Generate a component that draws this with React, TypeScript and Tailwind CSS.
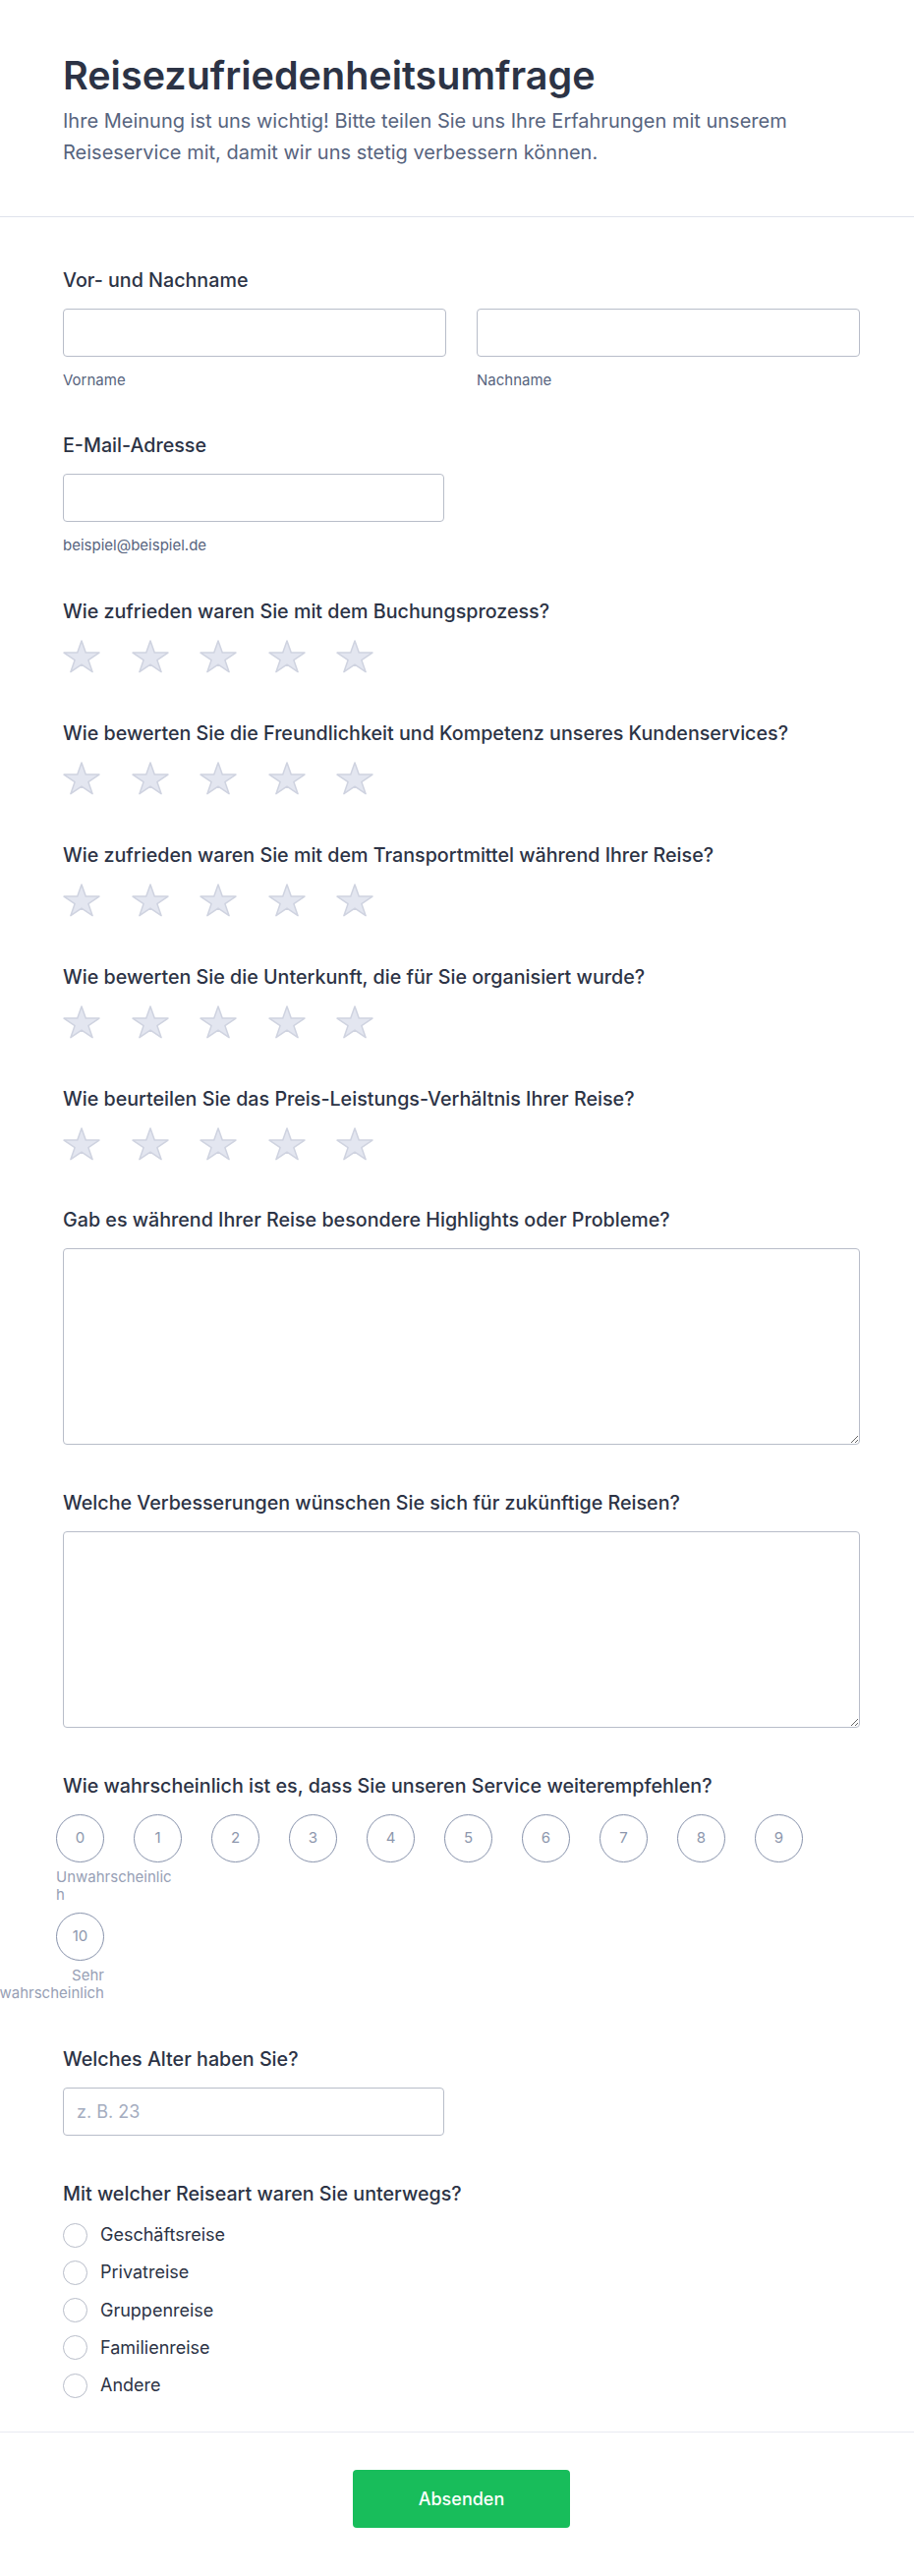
import React from 'react'

const ratingQuestions = [
  'Wie zufrieden waren Sie mit dem Buchungsprozess?',
  'Wie bewerten Sie die Freundlichkeit und Kompetenz unseres Kundenservices?',
  'Wie zufrieden waren Sie mit dem Transportmittel während Ihrer Reise?',
  'Wie bewerten Sie die Unterkunft, die für Sie organisiert wurde?',
  'Wie beurteilen Sie das Preis-Leistungs-Verhältnis Ihrer Reise?',
]

const travelTypes = ['Geschäftsreise', 'Privatreise', 'Gruppenreise', 'Familienreise', 'Andere']

function Label({ children }: { children: React.ReactNode }) {
  return <div className="text-[19.7px] leading-[28px] font-medium text-[#2c3345]">{children}</div>
}

function Star() {
  return (
    <svg width="40" height="36" viewBox="0 0 40 36" className="block">
      <path
        d="M20 2 L24.25 14.09 L37.97 14.09 L26.87 21.57 L31.11 33.66 L20 26.19 L8.89 33.66 L13.13 21.57 L2.03 14.09 L15.75 14.09 Z"
        fill="#e3e6f0"
        stroke="#cfd3e0"
        strokeWidth="1.5"
        strokeLinejoin="round"
      />
    </svg>
  )
}

export default function App() {
  return (
    <div className="w-[930px] bg-white" style={{ fontFamily: 'Inter, "Noto Sans", sans-serif' }}>
      {/* header */}
      <div className="pt-[54px] pb-[49px] pl-16 pr-[55px] border-b border-[#dfe3ec]">
        <h1 className="text-[39.5px] leading-[46px] font-semibold text-[#2c3345]">
          Reisezufriedenheitsumfrage
        </h1>
        <p className="mt-[7px] text-[20px] leading-[32px] text-[#57647e] max-w-[780px]">
          Ihre Meinung ist uns wichtig! Bitte teilen Sie uns Ihre Erfahrungen mit unserem Reiseservice mit, damit wir uns stetig verbessern können.
        </p>
      </div>

      <div className="pt-[50px] pl-16 pr-[55px] pb-[33px] flex flex-col">
        {/* name */}
        <div>
          <Label>Vor- und Nachname</Label>
          <div className="mt-[15px] grid grid-cols-2 gap-x-[31px]">
            <div>
              <input className="block w-full h-[49px] rounded-[4px] border border-[#b8bdc9] outline-none" />
              <div className="mt-[14px] text-[15px] leading-[20px] text-[#57647e]">Vorname</div>
            </div>
            <div>
              <input className="block w-full h-[49px] rounded-[4px] border border-[#b8bdc9] outline-none" />
              <div className="mt-[14px] text-[15px] leading-[20px] text-[#57647e]">Nachname</div>
            </div>
          </div>
        </div>

        {/* email */}
        <div className="mt-[42px]">
          <Label>E-Mail-Adresse</Label>
          <input className="mt-[15px] block w-[388px] h-[49px] rounded-[4px] border border-[#b8bdc9] outline-none" />
          <div className="mt-[14px] text-[15px] leading-[20px] text-[#57647e]">beispiel@beispiel.de</div>
        </div>

        {/* ratings */}
        {ratingQuestions.map((q, i) => (
          <div key={q} className={i === 0 ? 'mt-[43px]' : 'mt-[46px]'}>
            <Label>{q}</Label>
            <div className="mt-[14px] -ml-[1px] flex gap-x-[29.5px]">
              {[0, 1, 2, 3, 4].map((s) => (
                <Star key={s} />
              ))}
            </div>
          </div>
        ))}

        {/* textareas */}
        <div className="mt-[45px]">
          <Label>Gab es während Ihrer Reise besondere Highlights oder Probleme?</Label>
          <textarea className="mt-[15px] block w-full h-[200px] rounded-[4px] border border-[#b8bdc9] outline-none" />
        </div>
        <div className="mt-[45px]">
          <Label>Welche Verbesserungen wünschen Sie sich für zukünftige Reisen?</Label>
          <textarea className="mt-[15px] block w-full h-[200px] rounded-[4px] border border-[#b8bdc9] outline-none" />
        </div>

        {/* nps */}
        <div className="mt-[45px]">
          <Label>Wie wahrscheinlich ist es, dass Sie unseren Service weiterempfehlen?</Label>
          <div className="mt-[15px] -ml-[7px] flex flex-wrap gap-x-[30px] gap-y-[9px]">
            {Array.from({ length: 11 }, (_, n) => (
              <div key={n} className="w-[49px] flex flex-col">
                <div className="w-[49px] h-[49px] rounded-full border border-[#8792ab] flex items-center justify-center text-[15px] text-[#8d97ad]">
                  {n}
                </div>
                {n === 0 && (
                  <div className="mt-[6px] w-[118px] text-[15px] leading-[18px] text-[#97a0b5] break-all">
                    Unwahrscheinlich
                  </div>
                )}
                {n === 10 && (
                  <div className="mt-[6px] w-[118px] -ml-[69px] text-right text-[15px] leading-[18px] text-[#97a0b5]">
                    Sehr wahrscheinlich
                  </div>
                )}
              </div>
            ))}
          </div>
        </div>

        {/* age */}
        <div className="mt-[44px]">
          <Label>Welches Alter haben Sie?</Label>
          <input
            placeholder="z. B. 23"
            className="mt-[15px] block w-[388px] h-[49px] rounded-[4px] border border-[#b8bdc9] px-[13px] text-[18px] outline-none placeholder:text-[#a5adbf]"
          />
        </div>

        {/* travel type */}
        <div className="mt-[45px]">
          <Label>Mit welcher Reiseart waren Sie unterwegs?</Label>
          <div className="mt-[14px] flex flex-col gap-y-[10.3px]">
            {travelTypes.map((t) => (
              <label key={t} className="flex items-center h-[28px]">
                <span className="w-[25px] h-[25px] rounded-full border border-[#b8bdc9] bg-white shrink-0" />
                <span className="ml-[13px] text-[18px] leading-[28px] text-[#2c3345]">{t}</span>
              </label>
            ))}
          </div>
        </div>
      </div>

      {/* footer */}
      <div className="border-t border-[#e8eaf1] pt-[38px] pb-[50px] pl-16 pr-[55px] flex justify-center">
        <button className="w-[221px] h-[59px] rounded-[4px] bg-[#18bd5b] text-white text-[18px] font-medium">
          Absenden
        </button>
      </div>
    </div>
  )
}
